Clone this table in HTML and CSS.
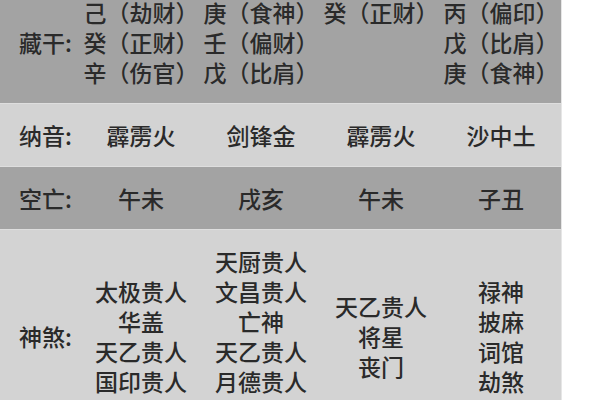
FILE: index.html
```html
<!DOCTYPE html>
<html lang="zh-CN">
<head>
<meta charset="utf-8">
<title>八字</title>
<link rel="stylesheet" href="styles.css">
</head>
<body>
<div class="chart">
  <div class="row dark">
    <div class="label">藏干:</div>
    <div class="cell">己（劫财）<br>癸（正财）<br>辛（伤官）</div>
    <div class="cell">庚（食神）<br>壬（偏财）<br>戊（比肩）</div>
    <div class="cell cell-top">癸（正财）</div>
    <div class="cell">丙（偏印）<br>戊（比肩）<br>庚（食神）</div>
  </div>
  <div class="row light">
    <div class="label">纳音:</div>
    <div class="cell">霹雳火</div>
    <div class="cell">剑锋金</div>
    <div class="cell">霹雳火</div>
    <div class="cell">沙中土</div>
  </div>
  <div class="row dark">
    <div class="label">空亡:</div>
    <div class="cell">午未</div>
    <div class="cell">戌亥</div>
    <div class="cell">午未</div>
    <div class="cell">子丑</div>
  </div>
  <div class="row light">
    <div class="label">神煞:</div>
    <div class="cell">太极贵人<br>华盖<br>天乙贵人<br>国印贵人</div>
    <div class="cell">天厨贵人<br>文昌贵人<br>亡神<br>天乙贵人<br>月德贵人<br>学堂</div>
    <div class="cell">天乙贵人<br>将星<br>丧门</div>
    <div class="cell">禄神<br>披麻<br>词馆<br>劫煞</div>
  </div>
</div>
</body>
</html>
```
FILE: styles.css
```css
html, body {
  margin: 0;
  padding: 0;
  background: #ffffff;
}
body {
  font-family: "Noto Sans CJK SC", "Noto Sans", sans-serif;
  font-size: 23px;
  font-weight: 500;
  line-height: 30px;
  color: #2a2a2a;
  overflow: hidden;
}
.chart {
  width: 561px;
  margin-top: -19px;
  border-right: 1px solid #e6e6e6;
}
.row {
  display: grid;
  grid-template-columns: 81px repeat(4, 120px);
  align-items: center;
  padding: 16px 0;
  border-bottom: 1px solid #dedede;
}
.dark {
  background: #a3a3a3;
}
.light {
  background: #d3d3d3;
}
.label {
  padding-left: 19px;
  white-space: nowrap;
}
.cell {
  text-align: center;
  white-space: nowrap;
}
.cell-top {
  align-self: start;
}
```
